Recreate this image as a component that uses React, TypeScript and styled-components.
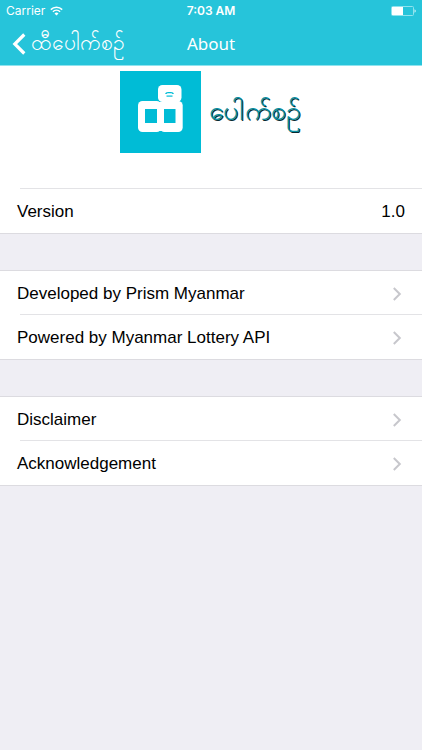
import React from "react";
import styled, { createGlobalStyle } from "styled-components";

const GlobalStyle = createGlobalStyle`
  * { box-sizing: border-box; }
  html { background: #efeef4; }
  body {
    margin: 0;
    background: #efeef4;
    color: #000;
    font-family: "Liberation Sans", Arial, sans-serif;
  }
`;

const Header = styled.header`
  background: #26c4da;
  color: #fff;
  border-bottom: 1px solid #8fe3ee;
`;

const StatusBar = styled.div`
  display: grid;
  grid-template-columns: 1fr auto 1fr;
  align-items: center;
  height: 22px;
  padding: 0 6px;
  font-family: Inter, sans-serif;
  font-size: 12px;
  line-height: 16px;
`;

const Carrier = styled.span`
  display: flex;
  align-items: center;
  gap: 5px;
`;

const Clock = styled.time`
  font-weight: 600;
`;

const Battery = styled.svg`
  justify-self: end;
`;

const NavBar = styled.nav`
  display: grid;
  grid-template-columns: 1fr auto 1fr;
  align-items: center;
  height: 43px;
  padding: 0 12px;
`;

const BackButton = styled.button`
  display: flex;
  align-items: center;
  justify-self: start;
  gap: 5px;
  padding: 0;
  border: 0;
  background: none;
  color: inherit;
  font-family: "Noto Sans", sans-serif;
  font-size: 21px;
  white-space: nowrap;
  cursor: pointer;
`;

const BackLabel = styled.span`
  padding-bottom: 4px;
  line-height: 36px;
`;

const Title = styled.h1`
  margin: 0;
  font-family: "Noto Sans", sans-serif;
  font-size: 17px;
  font-weight: 400;
  line-height: 24px;
`;

const Group = styled.section`
  background: #fff;
  border-bottom: 1px solid #dcdbe0;
`;

const LinkGroup = styled(Group)`
  margin-top: 36px;
  border-top: 1px solid #dcdbe0;
`;

const Brand = styled.div`
  display: flex;
  justify-content: center;
  gap: 8px;
  height: 123px;
  padding-top: 5px;
`;

const BrandName = styled.span`
  color: #0a8fa1;
  font-family: "Noto Sans", sans-serif;
  font-size: 27px;
  font-weight: 500;
  line-height: 78px;
  text-shadow: 1px 1px 0 #052a31;
`;

const Divider = styled.hr`
  height: 1px;
  margin: -1px 0 0 20px;
  border: 0;
  background: #e3e3e6;
`;

const Row = styled.div`
  display: flex;
  align-items: center;
  justify-content: space-between;
  height: 44px;
  padding: 1px 17px 0;
  font-size: 17px;
  line-height: 22px;
`;

const LinkRow = styled(Row)`
  padding-right: 20px;
  color: inherit;
  text-decoration: none;
`;

const WifiIcon = () => (
  <svg width="13" height="10" viewBox="0 0 13 10" fill="none" stroke="#fff" strokeWidth="1.5" aria-hidden="true">
    <path d="M0.8 3.6a8.2 8.2 0 0 1 11.4 0" />
    <path d="M2.9 5.8a5.2 5.2 0 0 1 7.2 0" />
    <path d="M6.5 9.6 4.5 7.5a2.9 2.9 0 0 1 4 0z" fill="#fff" stroke="none" />
  </svg>
);

const BatteryIcon = () => (
  <Battery width="26" height="12" viewBox="0 0 26 12" aria-hidden="true">
    <rect x="1.5" y="1.5" width="22" height="9" rx="1" fill="none" stroke="#8fe3ee" />
    <rect x="2" y="2" width="11" height="8" fill="#fff" />
    <path d="M24.5 4.2v3.6q1.3-.5 1.3-1.8t-1.3-1.8z" fill="#c8f1f6" />
  </Battery>
);

const BackIcon = () => (
  <svg width="14" height="22" viewBox="0 0 14 22" fill="none" stroke="#fff" strokeWidth="3.2" aria-hidden="true">
    <path d="M12.3 1.5 2.8 11l9.5 9.5" />
  </svg>
);

const Chevron = () => (
  <svg width="10" height="14" viewBox="0 0 10 14" fill="none" stroke="#c7c7cc" strokeWidth="2" aria-hidden="true">
    <path d="M1.8 1 7.8 7l-6 6" />
  </svg>
);

const Logo = () => (
  <svg width="81" height="82" viewBox="0 0 81 82" role="img" aria-label="Logo">
    <rect width="81" height="82" fill="#00bcd6" />
    <g fill="#fff">
      <rect x="18" y="30" width="23.2" height="31" rx="4.5" />
      <rect x="40" y="30" width="22.7" height="31" rx="4.5" />
      <rect x="38" y="14" width="23.5" height="17" rx="4.5" />
      <rect x="36" y="31" width="10" height="29" />
    </g>
    <g fill="#00bcd6">
      <rect x="25" y="38" width="12" height="14" />
      <rect x="44" y="38" width="11.5" height="14" />
      <path d="M45 23q.5-2 3-2h3q2.5 0 3 2h-1.5l-1-.8h-4l-1 .8z" />
      <rect x="46.5" y="24.5" width="6" height="1.2" />
    </g>
  </svg>
);

const groups = [
  ["Developed by Prism Myanmar", "Powered by Myanmar Lottery API"],
  ["Disclaimer", "Acknowledgement"],
];

export default function App() {
  return (
    <>
      <GlobalStyle />
      <Header>
        <StatusBar>
          <Carrier>Carrier <WifiIcon /></Carrier>
          <Clock>7:03 AM</Clock>
          <BatteryIcon />
        </StatusBar>
        <NavBar>
          <BackButton type="button"><BackIcon /><BackLabel>ထီပေါက်စဉ်</BackLabel></BackButton>
          <Title>About</Title>
        </NavBar>
      </Header>
      <main>
        <Group>
          <Brand>
            <Logo />
            <BrandName>ပေါက်စဉ်</BrandName>
          </Brand>
          <Divider />
          <Row><span>Version</span><span>1.0</span></Row>
        </Group>
        {groups.map((labels) => (
          <LinkGroup key={labels[0]}>
            {labels.map((label, index) => (
              <React.Fragment key={label}>
                {index > 0 && <Divider />}
                <LinkRow as="a" href="#">{label}<Chevron /></LinkRow>
              </React.Fragment>
            ))}
          </LinkGroup>
        ))}
      </main>
    </>
  );
}
